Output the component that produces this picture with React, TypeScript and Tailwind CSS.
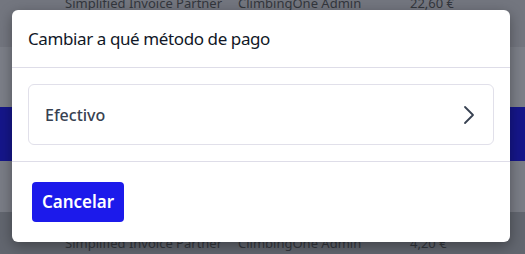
export default function App() {
  return (
    <div className="relative h-[254px] w-[525px] overflow-hidden font-['Noto_Sans',sans-serif]">
      {/* table behind the overlay */}
      <div className="flex flex-col whitespace-nowrap text-[13px] text-[#33363d]">
        <div className="flex h-[47px] items-start bg-[#73767f]">
          <span className="-mt-[6px] ml-[65px] w-[173px] shrink-0">Simplified Invoice Partner</span>
          <span className="-mt-[6px] w-[172px] shrink-0">ClimbingOne Admin</span>
          <span className="-mt-[6px]">22,60 €</span>
        </div>
        <div className="h-[60px] bg-[#7c7f88]"></div>
        <div className="h-[54px] bg-[#15168a]"></div>
        <div className="h-[51px] bg-[#7a7d86]"></div>
        <div className="flex h-[42px] items-start bg-[#62666f]">
          <span className="ml-[65px] mt-[22px] w-[173px] shrink-0">Simplified Invoice Partner</span>
          <span className="mt-[22px] w-[172px] shrink-0">ClimbingOne Admin</span>
          <span className="mt-[22px]">4,20 €</span>
        </div>
      </div>

      {/* modal */}
      <div className="absolute left-[12px] top-[10px] flex w-[498px] flex-col rounded-md bg-white shadow-[0_4px_14px_rgba(0,0,0,0.35)]">
        <div className="flex h-[58px] items-center border-b border-[#dedde8] px-4">
          <h2 className="text-[17px] tracking-[-0.4px] text-[#111827]">Cambiar a qué método de pago</h2>
        </div>
        <div className="border-b border-[#dedde8] px-4 pb-4 pt-[16px]">
          <button className="flex h-[61px] w-[466px] items-center justify-between rounded-md border border-[#e1e0ea] pl-4 pr-[18px]">
            <span className="text-[16px] font-medium text-[#374151]">Efectivo</span>
            <svg width="12" height="20" viewBox="0 0 12 20" fill="none">
              <polyline points="2,2 10,10 2,18" stroke="#374151" strokeWidth="1.8" strokeLinecap="round" strokeLinejoin="round" />
            </svg>
          </button>
        </div>
        <div className="flex h-[80px] items-center px-5">
          <button className="h-[40px] w-[92px] rounded-[4px] bg-[#1c1aeb] text-[17px] font-semibold text-white">
            Cancelar
          </button>
        </div>
      </div>
    </div>
  );
}
